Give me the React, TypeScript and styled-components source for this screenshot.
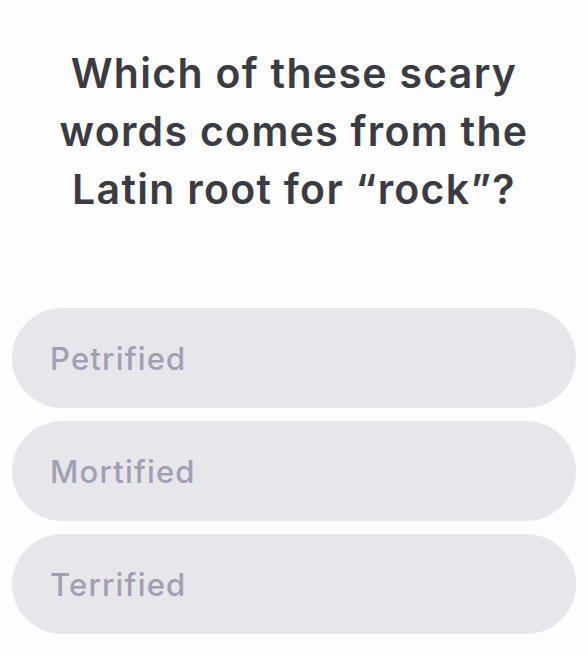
import React from "react";
import styled, { createGlobalStyle } from "styled-components";

const Global = createGlobalStyle`
  html, body { margin: 0; padding: 0; background: #fdfdfd; }
  body { font-family: "Inter", "Noto Sans", sans-serif; }
`;

const Page = styled.div`
  width: 588px;
  height: 656px;
  display: flex;
  flex-direction: column;
  box-sizing: border-box;
  padding: 44px 12px 0 12px;
`;

const Question = styled.h1`
  margin: 0;
  text-align: center;
  font-family: "Inter", sans-serif;
  font-weight: 600;
  font-size: 41px;
  line-height: 58px;
  color: #3b3b43;
  letter-spacing: 1.3px;
`;

const Options = styled.div`
  margin-top: 90px;
  display: flex;
  flex-direction: column;
  gap: 13px;
`;

const Option = styled.button`
  height: 100px;
  border: none;
  border-radius: 50px;
  background: #e7e6ea;
  display: flex;
  align-items: center;
  padding: 0 38px;
  font-family: "Inter", sans-serif;
  font-size: 31px;
  font-weight: 500;
  color: #a29fb2;
  text-align: left;
  letter-spacing: 1.2px;
`;

const answers = ["Petrified", "Mortified", "Terrified"];

export default function App() {
  return (
    <>
      <Global />
      <Page>
        <Question>
          Which of these scary
          <br />
          words comes from the
          <br />
          Latin root for “rock”?
        </Question>
        <Options>
          {answers.map((a) => (
            <Option key={a}>{a}</Option>
          ))}
        </Options>
      </Page>
    </>
  );
}
